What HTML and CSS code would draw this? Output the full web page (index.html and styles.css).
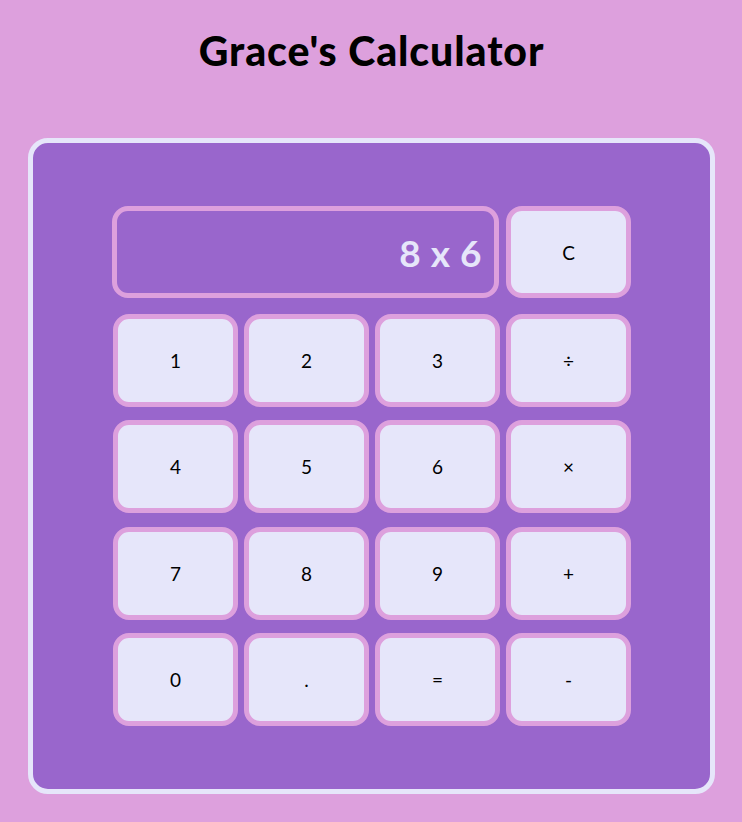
FILE: index.html
```html
<!DOCTYPE html>
<html lang="en">
<head>
<meta charset="utf-8">
<title>Grace's Calculator</title>
<link rel="stylesheet" href="styles.css">
</head>
<body>
<h1 class="title">Grace's Calculator</h1>
<div class="calculator">
  <div class="top-row">
    <div class="display">8 x 6</div>
    <button class="key">C</button>
  </div>
  <div class="keypad">
    <button class="key">1</button>
    <button class="key">2</button>
    <button class="key">3</button>
    <button class="key">÷</button>
    <button class="key">4</button>
    <button class="key">5</button>
    <button class="key">6</button>
    <button class="key">×</button>
    <button class="key">7</button>
    <button class="key">8</button>
    <button class="key">9</button>
    <button class="key">+</button>
    <button class="key">0</button>
    <button class="key">.</button>
    <button class="key">=</button>
    <button class="key">-</button>
  </div>
</div>
</body>
</html>
```

FILE: styles.css
```css
* { box-sizing: border-box; }

body {
  margin: 0;
  padding: 0 27px 28px 28px;
  background: #dda0dd;
  font-family: "Lato", "Open Sans", sans-serif;
}

.title {
  margin: 27px 0 0;
  font-size: 41px;
  line-height: 48px;
  font-weight: 900;
  letter-spacing: 0.9px;
  text-align: center;
  color: #000;
}

.calculator {
  margin-top: 63px;
  height: 656px;
  background: #9966cc;
  border: 5px solid #e6e6fa;
  border-radius: 20px;
  padding: 63px 0;
  display: flex;
  flex-direction: column;
  align-items: center;
  gap: 16px;
}

.top-row {
  display: flex;
  gap: 7px;
  width: 519px;
}

.display {
  width: 387px;
  height: 92px;
  border: 5px solid #dda0dd;
  border-radius: 16px;
  color: #e6e6fa;
  font-size: 37px;
  font-weight: 700;
  letter-spacing: 0.5px;
  display: flex;
  align-items: center;
  justify-content: flex-end;
  padding-right: 12px;
}

.keypad {
  display: grid;
  grid-template-columns: repeat(4, 125px);
  grid-auto-rows: 93px;
  column-gap: 6px;
  row-gap: 13.4px;
  width: 519px;
  margin-left: 2px;
}

.key {
  width: 125px;
  height: 93px;
  background: #e6e6fa;
  border: 5px solid #dda0dd;
  border-radius: 16px;
  font-family: inherit;
  font-size: 19px;
  color: #000;
  padding: 0;
}

.top-row .key {
  height: 92px;
}
```
